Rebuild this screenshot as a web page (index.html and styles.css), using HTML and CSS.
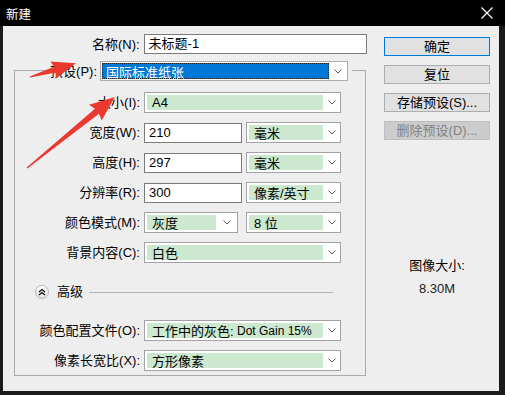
FILE: index.html
```html
<!DOCTYPE html>
<html lang="zh">
<head>
<meta charset="utf-8">
<title>新建</title>
<link rel="stylesheet" href="styles.css">
</head>
<body>
<div class="window">
  <div class="titlebar">
    <span class="title">新建</span>
    <svg class="close" width="12" height="12" viewBox="0 0 12 12"><path d="M0.5 0.5 L11.5 11.5 M11.5 0.5 L0.5 11.5" stroke="#fff" stroke-width="1.2" fill="none"/></svg>
  </div>
  <div class="dialog">
    <div class="main">
      <div class="row name-row">
        <span class="lbl name-lbl">名称(N):</span>
        <div class="input name-input">未标题-1</div>
      </div>
      <div class="group">
        <div class="row legend-row">
          <div class="lbl legend-lbl"><span class="legend-text">预设(P):</span></div>
          <div class="select preset">
            <div class="val">国际标准纸张</div>
            <div class="arrow"><svg width="8" height="5" viewBox="0 0 8 5"><polyline points="0.5,0.5 4,4 7.5,0.5" fill="none" stroke="#555"/></svg></div>
          </div>
          <div class="legend-gap"></div>
        </div>
        <div class="row r-size">
          <div class="lbl">大小(I):</div>
          <div class="select full"><div class="val">A4</div><div class="arrow"><svg width="8" height="5" viewBox="0 0 8 5"><polyline points="0.5,0.5 4,4 7.5,0.5" fill="none" stroke="#555"/></svg></div></div>
        </div>
        <div class="row">
          <div class="lbl">宽度(W):</div>
          <div class="input num">210</div>
          <div class="select unit"><div class="val">毫米</div><div class="arrow"><svg width="8" height="5" viewBox="0 0 8 5"><polyline points="0.5,0.5 4,4 7.5,0.5" fill="none" stroke="#555"/></svg></div></div>
        </div>
        <div class="row">
          <div class="lbl">高度(H):</div>
          <div class="input num">297</div>
          <div class="select unit"><div class="val">毫米</div><div class="arrow"><svg width="8" height="5" viewBox="0 0 8 5"><polyline points="0.5,0.5 4,4 7.5,0.5" fill="none" stroke="#555"/></svg></div></div>
        </div>
        <div class="row">
          <div class="lbl">分辨率(R):</div>
          <div class="input num">300</div>
          <div class="select unit"><div class="val">像素/英寸</div><div class="arrow"><svg width="8" height="5" viewBox="0 0 8 5"><polyline points="0.5,0.5 4,4 7.5,0.5" fill="none" stroke="#555"/></svg></div></div>
        </div>
        <div class="row">
          <div class="lbl">颜色模式(M):</div>
          <div class="select mode"><div class="val">灰度</div><div class="arrow"><svg width="8" height="5" viewBox="0 0 8 5"><polyline points="0.5,0.5 4,4 7.5,0.5" fill="none" stroke="#555"/></svg></div></div>
          <div class="select unit"><div class="val">8 位</div><div class="arrow"><svg width="8" height="5" viewBox="0 0 8 5"><polyline points="0.5,0.5 4,4 7.5,0.5" fill="none" stroke="#555"/></svg></div></div>
        </div>
        <div class="row">
          <div class="lbl">背景内容(C):</div>
          <div class="select full"><div class="val">白色</div><div class="arrow"><svg width="8" height="5" viewBox="0 0 8 5"><polyline points="0.5,0.5 4,4 7.5,0.5" fill="none" stroke="#555"/></svg></div></div>
        </div>
        <div class="advanced">
          <span class="adv-icon"><svg width="14" height="14" viewBox="0 0 14 14"><polyline points="4,7 7,4.5 10,7" fill="none" stroke="#111" stroke-width="1.3"/><polyline points="4,10 7,7.5 10,10" fill="none" stroke="#111" stroke-width="1.3"/></svg></span>
          <span class="adv-text">高级</span>
          <span class="adv-line"></span>
        </div>
        <div class="row r-profile">
          <div class="lbl">颜色配置文件(O):</div>
          <div class="select full"><div class="val">工作中的灰色:<span class="latin">&nbsp;Dot Gain 15%</span></div><div class="arrow"><svg width="8" height="5" viewBox="0 0 8 5"><polyline points="0.5,0.5 4,4 7.5,0.5" fill="none" stroke="#555"/></svg></div></div>
        </div>
        <div class="row">
          <div class="lbl">像素长宽比(X):</div>
          <div class="select full"><div class="val">方形像素</div><div class="arrow"><svg width="8" height="5" viewBox="0 0 8 5"><polyline points="0.5,0.5 4,4 7.5,0.5" fill="none" stroke="#555"/></svg></div></div>
        </div>
      </div>
    </div>
    <div class="side">
      <div class="btn primary">确定</div>
      <div class="btn">复位</div>
      <div class="btn">存储预设(S)...</div>
      <div class="btn disabled">删除预设(D)...</div>
      <div class="info">
        <div class="info-title">图像大小:</div>
        <div class="info-val">8.30M</div>
      </div>
    </div>
  </div>
  <svg class="arrows" width="505" height="395" viewBox="0 0 505 395">
    <g transform="translate(30,77) rotate(-16.5)">
      <polygon points="0,-0.6 26,-3 24,-9 48,0 24,9 26,3 0,0.6" fill="#ea3a30"/>
    </g>
    <g transform="translate(27,168) rotate(-39)">
      <polygon points="0,-0.6 90,-3.2 88,-10 113,0 88,10 90,3.2 0,0.6" fill="#ea3a30"/>
    </g>
  </svg>
</div>
</body>
</html>
```

FILE: styles.css
```css
html, body {
  margin: 0;
  padding: 0;
}
body {
  width: 505px;
  height: 395px;
  background: #1b1b1b;
  font-family: "Liberation Sans", "Noto Sans CJK SC", sans-serif;
  font-size: 13px;
  color: #000;
  overflow: hidden;
}
.window {
  position: relative;
  width: 505px;
  height: 395px;
  display: flex;
  flex-direction: column;
}
.titlebar {
  height: 26px;
  background: #000;
  display: flex;
  align-items: center;
  justify-content: space-between;
  padding: 0 12px 0 6px;
  box-sizing: border-box;
  flex: none;
}
.title {
  color: #fff;
  font-family: "Noto Sans CJK SC", sans-serif;
  font-size: 12.5px;
}
.close {
  display: block;
}
.dialog {
  margin: 0 6px 4px 3px;
  flex: 1;
  background: #eeeeee;
  display: flex;
  align-items: flex-start;
}
.main {
  width: 364px;
  padding-top: 8px;
}
.row {
  display: flex;
  align-items: center;
  height: 21px;
  margin-top: 9px;
}
.lbl {
  width: 125px;
  text-align: right;
  margin-right: 4px;
  white-space: nowrap;
  line-height: 21px;
}
.name-row {
  margin-top: 0;
  height: 20px;
}
.name-lbl {
  width: 137px;
}
.input {
  height: 20px;
  box-sizing: border-box;
  border: 1px solid #7a7a7a;
  background: #fff;
  padding-left: 4px;
  line-height: 18px;
  white-space: nowrap;
}
.name-input {
  width: 224px;
}
.num {
  width: 98px;
  margin-right: 4px;
}
.group {
  margin: 16px 0 0 11px;
  width: 352px;
  box-sizing: border-box;
  border: 1px solid #a9a9a9;
  padding-bottom: 4px;
}
.legend-row {
  margin-top: -10px;
  height: 20px;
}
.legend-lbl {
  width: 82px;
  margin-right: 3px;
}
.legend-text {
  background: #eeeeee;
  padding-left: 4px;
  padding-right: 3px;
  margin-right: -3px;
}
.legend-gap {
  width: 4px;
  height: 20px;
  background: #eeeeee;
}
.select {
  display: flex;
  align-items: stretch;
  height: 21px;
  box-sizing: border-box;
  border: 1px solid #a3a3a3;
  background: #fff;
  padding: 2px 0 2px 2px;
}
.select .val {
  flex: 1;
  display: flex;
  align-items: center;
  background: #cce8cf;
  padding-left: 5px;
  white-space: nowrap;
}
.latin {
  font-size: 12px;
}
.select .arrow {
  width: 17px;
  display: flex;
  align-items: center;
  justify-content: center;
}
.select .arrow svg {
  display: block;
}
.preset {
  width: 248px;
  height: 20px;
  border-color: #adadad;
  padding: 1px 0 1px 1px;
}
.preset .val {
  background: #0078d7;
  color: #fff;
  outline: 1px dotted #222;
  outline-offset: -1px;
  padding-left: 4px;
}
.preset .arrow {
  width: 18px;
}
.r-size {
  margin-top: 11px;
}
.full {
  width: 197px;
}
.unit {
  width: 95px;
}
.mode {
  width: 94px;
  margin-right: 8px;
}
.mode .val {
  flex: none;
  width: 69px;
  box-sizing: border-box;
}
.mode .arrow {
  flex: 1;
}
.advanced {
  display: flex;
  align-items: center;
  height: 16px;
  margin: 21px 32px 0 20px;
}
.adv-icon {
  width: 14px;
  height: 14px;
  border-radius: 50%;
  box-sizing: border-box;
  border: 1px solid #b5b5b5;
  background: linear-gradient(#ffffff, #dedede);
  display: flex;
  align-items: center;
  justify-content: center;
  overflow: hidden;
}
.adv-icon svg {
  display: block;
  flex: none;
}
.adv-text {
  margin-left: 8px;
  line-height: 16px;
}
.adv-line {
  flex: 1;
  height: 1px;
  background: #b3b3b3;
  margin-left: 6px;
}
.r-profile {
  margin-top: 20px;
}
.side {
  width: 106px;
  margin-left: 17px;
  padding-top: 11px;
  display: flex;
  flex-direction: column;
  gap: 9px;
}
.btn {
  height: 19px;
  box-sizing: border-box;
  border: 1px solid #adadad;
  background: #e1e1e1;
  text-align: center;
  line-height: 17px;
  white-space: nowrap;
}
.primary {
  border: 1px solid #0078d7;
  box-shadow: inset 0 0 0 1px #cfe6f8;
}
.disabled {
  background: #cccccc;
  border-color: #bfbfbf;
  color: #838383;
}
.info {
  margin-top: 109px;
  text-align: center;
}
.info-title {
  line-height: 16px;
}
.info-val {
  margin-top: 7px;
  line-height: 16px;
  color: #222;
}
.arrows {
  position: absolute;
  left: 0;
  top: 0;
  pointer-events: none;
}
```
